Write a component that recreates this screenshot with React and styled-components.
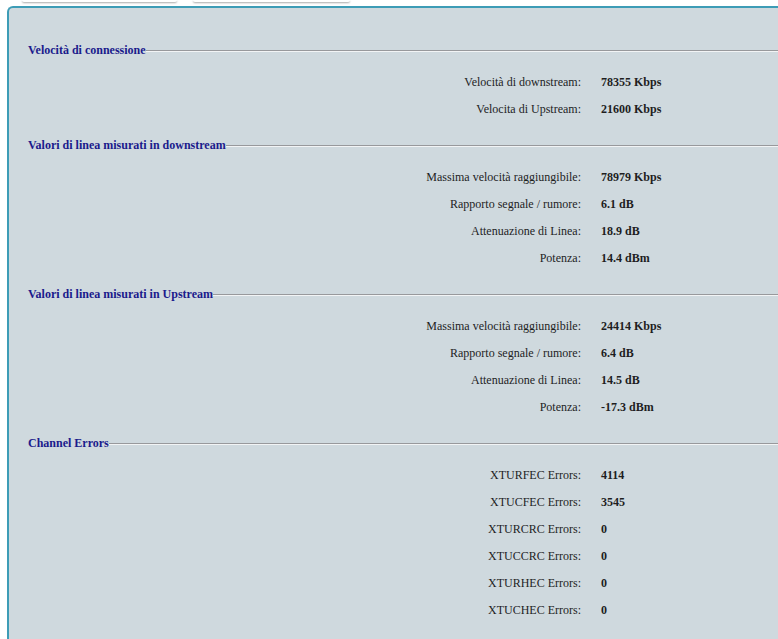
import React from "react";
import styled, { createGlobalStyle } from "styled-components";

const GlobalStyle = createGlobalStyle`
  html, body {
    margin: 0;
    padding: 0;
    background: #ffffff;
    overflow: hidden;
  }
  body {
    font-family: "Liberation Serif", "Times New Roman", serif;
  }
`;

const TabBar = styled.div`
  display: flex;
  gap: 16px;
  padding-left: 22px;
  height: 6px;
`;

const Tab = styled.div`
  width: ${(props) => props.width}px;
  height: 2px;
  background: #ffffff;
  border-radius: 0 0 5px 5px;
  box-shadow: 0 1px 2px rgba(0, 0, 0, 0.35);
`;

const Panel = styled.div`
  box-sizing: border-box;
  margin-left: 7px;
  margin-right: -20px;
  min-height: 633px;
  background: #cfd9de;
  border-top: 2px solid #3d9cb6;
  border-left: 2px solid #3d9cb6;
  border-top-left-radius: 6px;
  padding-top: 34px;
`;

const Section = styled.section`
  margin-bottom: 14px;
`;

const Header = styled.div`
  display: flex;
  align-items: center;
  height: 17px;
  margin-bottom: 10px;
  padding-left: 19px;
`;

const Title = styled.span`
  font-size: 12px;
  font-weight: bold;
  color: #1b1b8c;
  white-space: nowrap;
`;

const Rule = styled.div`
  flex: 1;
  height: 0;
  border-top: 1px solid #98999c;
  border-bottom: 1px solid #f2f4f5;
  margin-top: 1px;
`;

const Row = styled.div`
  display: grid;
  grid-template-columns: 572px auto;
  column-gap: 20px;
  align-items: center;
  height: 27px;
  font-size: 12px;
  color: #1e1e1e;
`;

const Label = styled.span`
  text-align: right;
`;

const Value = styled.span`
  font-weight: bold;
`;

const sections = [
  {
    title: "Velocità di connessione",
    rows: [
      ["Velocità di downstream:", "78355 Kbps"],
      ["Velocita di Upstream:", "21600 Kbps"],
    ],
  },
  {
    title: "Valori di linea misurati in downstream",
    rows: [
      ["Massima velocità raggiungibile:", "78979 Kbps"],
      ["Rapporto segnale / rumore:", "6.1 dB"],
      ["Attenuazione di Linea:", "18.9 dB"],
      ["Potenza:", "14.4 dBm"],
    ],
  },
  {
    title: "Valori di linea misurati in Upstream",
    rows: [
      ["Massima velocità raggiungibile:", "24414 Kbps"],
      ["Rapporto segnale / rumore:", "6.4 dB"],
      ["Attenuazione di Linea:", "14.5 dB"],
      ["Potenza:", "-17.3 dBm"],
    ],
  },
  {
    title: "Channel Errors",
    rows: [
      ["XTURFEC Errors:", "4114"],
      ["XTUCFEC Errors:", "3545"],
      ["XTURCRC Errors:", "0"],
      ["XTUCCRC Errors:", "0"],
      ["XTURHEC Errors:", "0"],
      ["XTUCHEC Errors:", "0"],
    ],
  },
];

const App = () => {
  return (
    <>
      <GlobalStyle />
      <TabBar>
        <Tab width={155} />
        <Tab width={157} />
      </TabBar>
      <Panel>
        {sections.map((section) => (
          <Section key={section.title}>
            <Header>
              <Title>{section.title}</Title>
              <Rule />
            </Header>
            {section.rows.map(([label, value]) => (
              <Row key={label}>
                <Label>{label}</Label>
                <Value>{value}</Value>
              </Row>
            ))}
          </Section>
        ))}
      </Panel>
    </>
  );
};

export default App;
